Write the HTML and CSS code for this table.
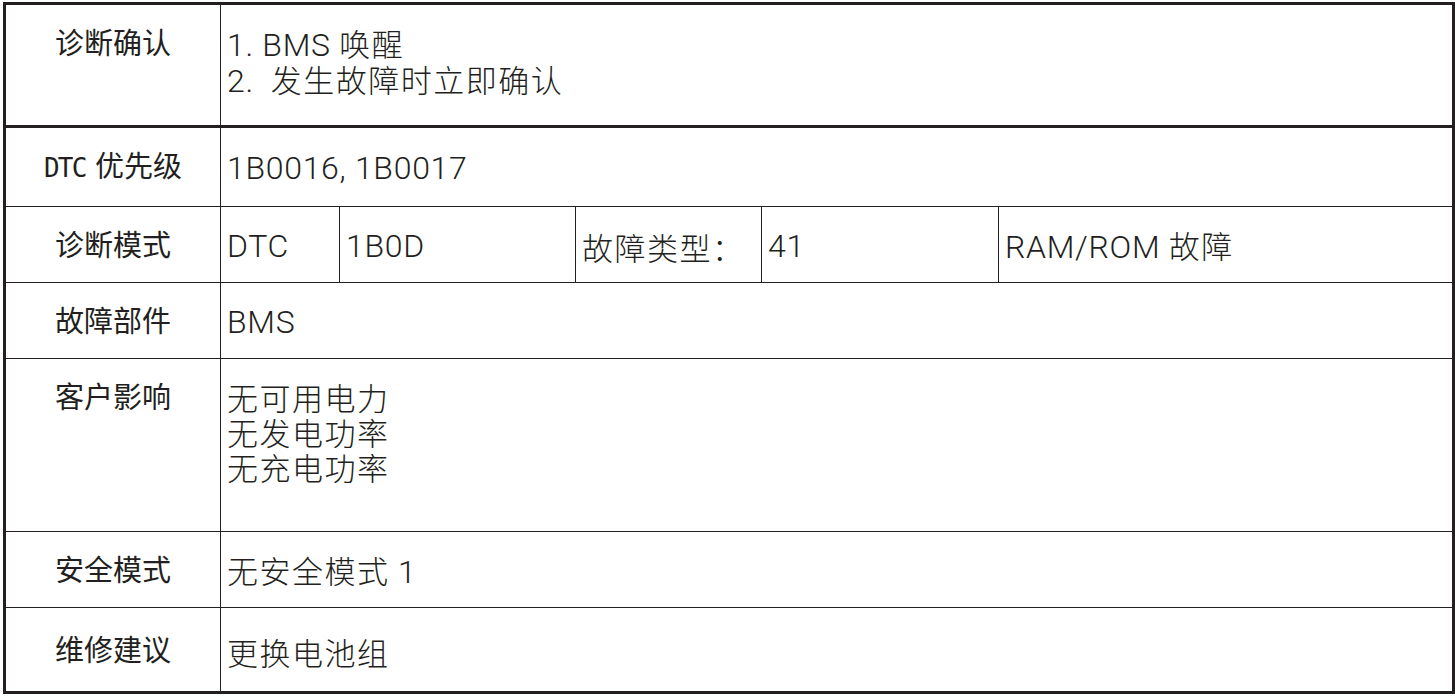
FILE: index.html
```html
<!DOCTYPE html>
<html lang="zh-CN">
<head>
<meta charset="utf-8">
<title>BMS 诊断</title>
<link rel="stylesheet" href="styles.css">
</head>
<body>
<div class="sheet">
  <div class="row row-confirm">
    <div class="cell label top">诊断确认</div>
    <div class="cell value top lines">
      <span class="line"><span class="lat">1. BMS </span>唤醒</span>
      <span class="line"><span class="lat">2.&nbsp;&nbsp;</span>发生故障时立即确认</span>
    </div>
  </div>
  <div class="row row-dtc">
    <div class="cell label"><span class="txt"><span class="mono">DTC</span> 优先级</span></div>
    <div class="cell value"><span class="txt lat">1B0016, 1B0017</span></div>
  </div>
  <div class="row row-mode">
    <div class="cell label">诊断模式</div>
    <div class="cell value"><span class="txt lat">DTC</span></div>
    <div class="cell value"><span class="txt lat">1B0D</span></div>
    <div class="cell value"><span class="txt">故障类型：</span></div>
    <div class="cell value"><span class="txt lat">41</span></div>
    <div class="cell value"><span class="txt"><span class="lat">RAM/ROM </span>故障</span></div>
  </div>
  <div class="row row-std">
    <div class="cell label">故障部件</div>
    <div class="cell value"><span class="txt lat">BMS</span></div>
  </div>
  <div class="row row-impact">
    <div class="cell label top">客户影响</div>
    <div class="cell value top lines">
      <span class="line">无可用电力</span>
      <span class="line">无发电功率</span>
      <span class="line">无充电功率</span>
    </div>
  </div>
  <div class="row row-std">
    <div class="cell label">安全模式</div>
    <div class="cell value"><span class="txt">无安全模式<span class="lat"> 1</span></span></div>
  </div>
  <div class="row row-last">
    <div class="cell label">维修建议</div>
    <div class="cell value"><span class="txt">更换电池组</span></div>
  </div>
</div>
</body>
</html>
```

FILE: styles.css
```css
* {
  box-sizing: border-box;
}

html, body {
  margin: 0;
  padding: 0;
  background: #ffffff;
}

body {
  padding: 2px 0 0 3px;
  color: #231f20;
  font-family: "Liberation Sans", "Noto Sans CJK SC", sans-serif;
}

.sheet {
  width: 1452px;
  border: 3px solid #231f20;
  display: flex;
  flex-direction: column;
}

.row {
  display: grid;
  grid-template-columns: 215px 1fr;
  border-bottom: 1px solid #231f20;
}

.row-confirm {
  height: 123px;
  border-bottom-width: 3px;
}

.row-dtc {
  height: 79px;
}

.row-std,
.row-mode {
  height: 76px;
}

.row-mode {
  grid-template-columns: 215px 119px 236px 186px 237px 1fr;
}

.row-impact {
  height: 173px;
}

.row-last {
  height: 83px;
  border-bottom: none;
}

.cell {
  display: flex;
  align-items: center;
  border-right: 1px solid #231f20;
  line-height: 35px;
}

.cell:last-child {
  border-right: none;
}

.label {
  justify-content: center;
  font-family: "Noto Sans CJK SC", sans-serif;
  font-size: 29px;
  padding-bottom: 2px;
}

.label.top {
  align-items: flex-start;
  padding-top: 19px;
  padding-bottom: 0;
}

.txt {
  white-space: pre;
}

.mono {
  font-family: "DejaVu Sans Mono", "Liberation Mono", monospace;
  font-size: 26px;
  letter-spacing: -1.8px;
  margin-right: 3px;
}

.value {
  padding-left: 6px;
  font-family: "Noto Sans CJK SC", sans-serif;
  font-size: 31px;
  font-weight: 300;
  letter-spacing: 1.5px;
  padding-top: 3px;
}

.value.top {
  align-items: flex-start;
  padding-top: 20px;
}

.lat {
  font-family: "Roboto", "Liberation Sans", sans-serif;
  font-weight: 300;
  font-size: 32px;
  letter-spacing: 0.7px;
}

.lines {
  flex-direction: column;
}

.line {
  display: block;
  height: 35px;
  white-space: pre;
}

.row-confirm .line {
  height: 36px;
}
```
